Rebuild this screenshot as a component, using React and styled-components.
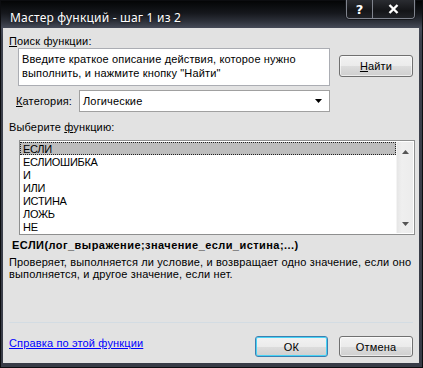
import React from 'react'
import styled, {createGlobalStyle} from 'styled-components'

const GlobalStyle = createGlobalStyle`
  html, body {
    margin: 0;
    padding: 0;
    background: #3a3e49;
  }
  * {
    box-sizing: border-box;
  }
`

const functions = ['ЕСЛИ', 'ЕСЛИОШИБКА', 'И', 'ИЛИ', 'ИСТИНА', 'ЛОЖЬ', 'НЕ']

const App = () => {
  return <Window>
    <GlobalStyle />
    <TitleBar>
      <Title>Мастер функций - шаг 1 из 2</Title>
      <TitleButtons>
        <CaptionBtn $w={25}>?</CaptionBtn>
        <CaptionBtn $w={42}>
          <svg width='11' height='10' viewBox='0 0 11 10'>
            <path d='M1.5 1 L9.5 9 M9.5 1 L1.5 9' stroke='#fff' strokeWidth='2.4' />
          </svg>
        </CaptionBtn>
      </TitleButtons>
    </TitleBar>
    <Client>
      <Label $mt={7}><u>П</u>оиск функции:</Label>
      <SearchRow>
        <SearchBox>
          Введите краткое описание действия, которое нужно выполнить, и нажмите кнопку "Найти"
        </SearchBox>
        <Button $mt={7} $w={74} $h={22}><u>Н</u>айти</Button>
      </SearchRow>
      <CategoryRow>
        <CategoryLabel><u>К</u>атегория:</CategoryLabel>
        <Select>
          <span>Логические</span>
          <svg width='7' height='4' viewBox='0 0 7 4'>
            <path d='M0 0 H7 L3.5 4 Z' fill='#000' />
          </svg>
        </Select>
      </CategoryRow>
      <Label $mt={9}>Выберите <u>ф</u>ункцию:</Label>
      <ListBox>
        <Items>
          {functions.map((name, i) => <Item key={name} $selected={i === 0}>{name}</Item>)}
        </Items>
        <ScrollBar>
          <svg width='7' height='4' viewBox='0 0 7 4'>
            <path d='M3.5 0 L7 4 H0 Z' fill='#555' />
          </svg>
          <svg width='7' height='4' viewBox='0 0 7 4'>
            <path d='M0 0 H7 L3.5 4 Z' fill='#555' />
          </svg>
        </ScrollBar>
      </ListBox>
      <Signature>ЕСЛИ(лог_выражение;значение_если_истина;...)</Signature>
      <Description>
        Проверяет, выполняется ли условие, и возвращает одно значение, если оно выполняется, и другое значение, если нет.
      </Description>
      <Spacer />
      <Separator />
      <Footer>
        <HelpLink href='#'>Справка по этой функции</HelpLink>
        <Buttons>
          <Button $w={73} $h={21} $default>ОК</Button>
          <Button $w={74} $h={21}>Отмена</Button>
        </Buttons>
      </Footer>
    </Client>
  </Window>
}

const Window = styled.div`
  width: 423px;
  height: 368px;
  display: flex;
  flex-direction: column;
  border: 1px solid #0c0d10;
  padding: 0 3px 4px 2px;
  background: linear-gradient(to bottom, #040506 0, #15171c 12px, #2c3039 20px, #464b58 27px, #3d414c 40px, #383c47 100%);
  font-family: "Liberation Sans", Arial, sans-serif;
  font-size: 11px;
  letter-spacing: 0.15px;
  color: #000;
`

const TitleBar = styled.div`
  height: 27px;
  display: flex;
  justify-content: space-between;
  align-items: flex-start;
  padding-left: 7px;
`

const Title = styled.div`
  margin-top: 9px;
  font-family: "Noto Sans", "DejaVu Sans", sans-serif;
  font-size: 12px;
  letter-spacing: 0.2px;
  line-height: 16px;
  color: #fff;
  text-shadow: 0 0 3px rgba(0, 0, 0, 0.8);
`

const TitleButtons = styled.div`
  display: flex;
  margin-top: -1px;
  margin-right: 4px;
  height: 19px;
  border: 1px solid #80848e;
  border-top: none;
  border-radius: 0 0 4px 4px;
  overflow: hidden;
  box-shadow: 0 0 0 1px #15171b;
`

const CaptionBtn = styled.div`
  width: ${p => p.$w}px;
  display: flex;
  align-items: center;
  justify-content: center;
  background: linear-gradient(to bottom, #2a2c31, #141518 60%, #202227);
  color: #fff;
  font-family: "DejaVu Sans", sans-serif;
  font-weight: bold;
  font-size: 13px;
  & + & {
    border-left: 1px solid #80848e;
  }
`

const Client = styled.div`
  flex: 1;
  display: flex;
  flex-direction: column;
  background: #e2e2e2;
  padding: 0 5px 0 6px;
`

const Label = styled.div`
  margin-top: ${p => p.$mt}px;
  height: 13px;
  line-height: 13px;
  white-space: nowrap;
  u {
    text-decoration-thickness: 1px;
  }
`

const SearchRow = styled.div`
  display: flex;
  align-items: flex-start;
  gap: 9px;
  margin-left: 9px;
  margin-right: 1px;
`

const SearchBox = styled.div`
  width: 312px;
  height: 38px;
  background: #fff;
  border: 1px solid #abadb3;
  padding: 3px 3px 0 3px;
  line-height: 14px;
`

const Button = styled.div`
  margin-top: ${p => p.$mt || 0}px;
  width: ${p => p.$w}px;
  height: ${p => p.$h}px;
  display: flex;
  align-items: center;
  justify-content: center;
  border: 1px solid ${p => p.$default ? '#3c7fb1' : '#707070'};
  border-radius: 3px;
  background: linear-gradient(to bottom, #f2f2f2 0, #ebebeb 50%, #dddddd 50%, #cfcfcf 100%);
  box-shadow: inset 0 0 0 1px ${p => p.$default ? '#48d3f5' : 'rgba(255,255,255,0.6)'};
`

const CategoryRow = styled.div`
  display: flex;
  align-items: center;
  margin-top: 4px;
  margin-left: 7px;
  height: 22px;
`

const CategoryLabel = styled.div`
  width: 63px;
`

const Select = styled.div`
  width: 251px;
  height: 22px;
  display: flex;
  align-items: center;
  justify-content: space-between;
  padding: 0 7px 0 3px;
  background: #fff;
  border: 1px solid #a0a0a0;
`

const ListBox = styled.div`
  margin: 6px -1px 0 10px;
  height: 95px;
  display: flex;
  border: 1px solid #8e8f8f;
  padding: 1px 1px 1px 0;
  background: #fff;
`

const Items = styled.div`
  flex: 1;
  overflow: hidden;
`

const Item = styled.div`
  height: 13px;
  line-height: 12px;
  padding-left: 2px;
  letter-spacing: -0.3px;
  white-space: nowrap;
  background: ${p => p.$selected ? '#bdbdbd' : 'transparent'};
  border: 1px dotted ${p => p.$selected ? '#222' : 'transparent'};
`

const ScrollBar = styled.div`
  width: 17px;
  display: flex;
  flex-direction: column;
  justify-content: space-between;
  align-items: center;
  padding: 8px 0 7px;
  background: linear-gradient(to right, #e6e6e6, #efefef 30%, #ececec);
  border-left: 1px solid #f4f4f4;
`

const Signature = styled.div`
  margin: 4px 0 0 3px;
  height: 13px;
  line-height: 13px;
  font-weight: bold;
  letter-spacing: 0.45px;
  white-space: nowrap;
`

const Description = styled.div`
  margin-top: 4px;
  line-height: 12px;
`

const Spacer = styled.div`
  flex: 1;
`

const Separator = styled.div`
  height: 1px;
  margin-right: 1px;
  background: #d3dce3;
`

const Footer = styled.div`
  display: flex;
  justify-content: space-between;
  align-items: flex-start;
  height: 40px;
  padding-top: 13px;
  margin-right: 1px;
`

const HelpLink = styled.a`
  margin-top: 1px;
  color: #0000ff;
  text-decoration: underline;
  line-height: 13px;
`

const Buttons = styled.div`
  display: flex;
  gap: 11px;
`

export default App
